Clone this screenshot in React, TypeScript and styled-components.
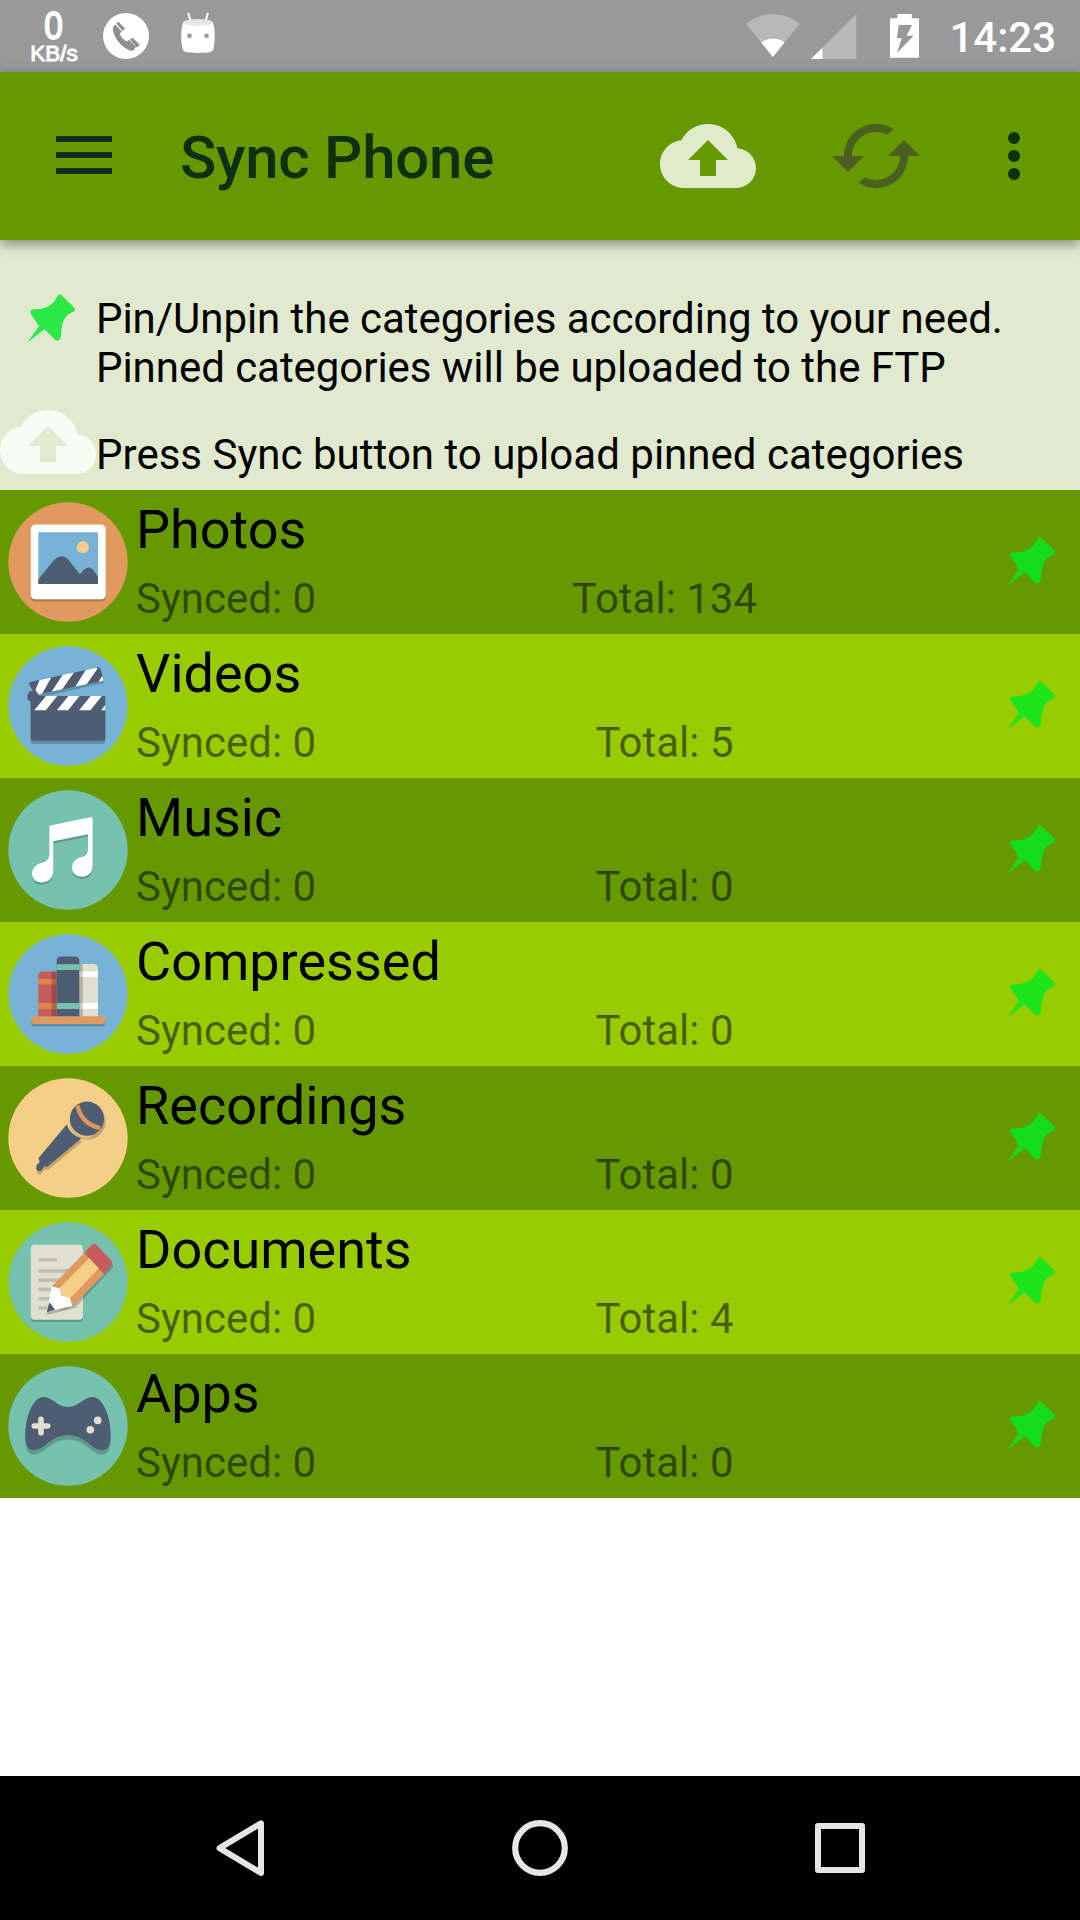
import React from "react";
import styled, { createGlobalStyle } from "styled-components";

const GlobalStyle = createGlobalStyle`
  * { box-sizing: border-box; }
  body { margin: 0; background: #fff; font-family: Roboto, "Noto Sans", sans-serif; }
  svg { display: block; flex: none; overflow: visible; }
`;

const Screen = styled.div`
  width: 1080px;
  height: 1920px;
  display: flex;
  flex-direction: column;
  background: #fff;
  overflow: hidden;
`;

const StatusBar = styled.header`
  height: 72px;
  flex: none;
  display: flex;
  align-items: flex-start;
  justify-content: space-between;
  background: #999;
  color: #fff;
`;

const StatusGroup = styled.div`
  display: flex;
  align-items: flex-start;
  height: 72px;
`;

const NetSpeed = styled.div`
  width: 52px;
  margin: 8px 23px 0 28px;
  display: flex;
  flex-direction: column;
  align-items: center;
  font-family: "Liberation Sans", Arial, sans-serif;
`;

const SpeedValue = styled.span`
  font-size: 38px;
  line-height: 36px;
  -webkit-text-stroke: 1.8px #fff;
  transform: scaleX(0.88);
`;

const SpeedUnit = styled.span`
  font-size: 22.5px;
  line-height: 20px;
  -webkit-text-stroke: 1px #fff;
`;

const Clock = styled.time`
  width: 133px;
  padding-right: 24px;
  margin-top: 13px;
  text-align: right;
  font-size: 42px;
  line-height: 49px;
  font-weight: 500;
`;

const AppBar = styled.nav`
  position: relative;
  height: 168px;
  flex: none;
  display: flex;
  align-items: center;
  background: #690;
  box-shadow: 0 4px 12px rgba(0, 0, 0, 0.42);
`;

const BarButton = styled.button<{ $width: number; $lift?: number }>`
  width: ${(p) => p.$width}px;
  height: 168px;
  padding: 0 0 ${(p) => p.$lift ?? 0}px;
  border: 0;
  background: none;
  display: flex;
  align-items: center;
  justify-content: center;
`;

const Title = styled.h1`
  flex: 1;
  margin: 0 0 0 12px;
  padding-top: 4px;
  font-size: 60px;
  line-height: 70px;
  font-weight: 500;
  letter-spacing: -0.25px;
  color: #0f3010;
`;

const Info = styled.section`
  height: 250px;
  flex: none;
  padding-top: 54px;
  background: #e1e9ce;
`;

const Hint = styled.div<{ $height: number }>`
  height: ${(p) => p.$height}px;
  display: flex;
  align-items: flex-start;
`;

const HintIcon = styled.div`
  width: 96px;
  flex: none;
`;

const PinHolder = styled.div`
  padding: 0 0 0 27px;
`;

const HintText = styled.p<{ $top: number; $tracking: number }>`
  margin: 0;
  padding-top: ${(p) => p.$top}px;
  font-size: 42px;
  line-height: 49px;
  letter-spacing: ${(p) => p.$tracking}px;
  color: #000;
  white-space: nowrap;
`;

const List = styled.ul`
  margin: 0;
  padding: 0;
  flex: 1;
  list-style: none;
`;

const Row = styled.li<{ $light: boolean }>`
  height: 144px;
  display: flex;
  align-items: center;
  padding: 0 25px 0 8px;
  background: ${(p) => (p.$light ? "#9c0" : "#690")};
`;

const RowBody = styled.div`
  flex: 1;
  height: 144px;
  padding: 8px 0 0 8px;
  display: flex;
  flex-direction: column;
  gap: 13px;
`;

const RowTitle = styled.div`
  font-size: 54px;
  line-height: 63px;
  color: #000;
`;

const RowStats = styled.div`
  display: grid;
  grid-template-columns: 351px 355px;
  font-size: 42px;
  line-height: 49px;
  color: rgba(0, 0, 0, 0.54);
`;

const Total = styled.span`
  text-align: center;
`;

const PinSlot = styled.div`
  width: 48px;
  height: 48px;
  margin-bottom: 2px;
`;

const NavBar = styled.footer`
  height: 144px;
  flex: none;
  display: flex;
  justify-content: center;
  background: #000;
`;

const NavButton = styled.button`
  width: 300px;
  height: 144px;
  padding: 0;
  border: 0;
  background: none;
  display: flex;
  align-items: center;
  justify-content: center;
`;

const CloudUpload = () => (
  <svg width="96" height="96" viewBox="0 0 24 24" fill="#fff" fillOpacity="0.8">
    <path d="M19.35 10.04C18.67 6.59 15.64 4 12 4 9.11 4 6.6 5.64 5.35 8.04 2.34 8.36 0 10.91 0 14c0 3.31 2.69 6 6 6h13c2.76 0 5-2.24 5-5 0-2.64-2.05-4.78-4.65-4.96zM14 13v4h-4v-4H7l5-5 5 5h-3z" />
  </svg>
);

const SyncArrows = () => (
  <svg width="96" height="96" viewBox="0 0 24 24" fill="#4a5f20">
    <path d="M19 8l-4 4h3c0 3.31-2.69 6-6 6-1.01 0-1.97-.25-2.8-.7l-1.46 1.46C8.97 19.54 10.43 20 12 20c4.42 0 8-3.58 8-8h3l-4-4zM6 12c0-3.31 2.69-6 6-6 1.01 0 1.97.25 2.8.7l1.46-1.46C15.03 4.46 13.57 4 12 4c-4.42 0-8 3.58-8 8H1l4 4 4-4H6z" />
  </svg>
);

const Pin = ({ color }: { color: string }) => (
  <svg width="48" height="48" viewBox="0 0 48 48" fill={color}>
    <path d="M31 1.2Q33 -.3 35 1.4L47 13.6Q49 16 46.6 17.6L41.5 20.2C36 24.5 34.5 31 34 42Q33.5 46 30.8 46.6Q29.2 47 27.5 45.2L17.6 35.2L.4 48.4L12 32L4.2 20.8Q2.2 18.4 3.8 16.2Q4.8 15 8 15.2C16 15.6 23.5 12.5 27.6 7Z" />
  </svg>
);

const BadgePhotos = () => (
  <>
    <circle cx="60" cy="60" r="59.7" fill="#e0995e" />
    <rect x="22.7" y="25" width="75" height="74.6" rx="4.5" fill="#b37b4b" />
    <rect x="22.7" y="22.6" width="75" height="74.6" rx="4.5" fill="#fff" />
    <path d="M30.3 30.2H90V82H30.3Z" fill="#76b3d6" />
    <circle cx="74.8" cy="45.2" r="6.1" fill="#f5cf87" />
    <path d="M30.3 77.5L46 58Q53.6 50.5 61 58.5L71.8 72.2L76.4 67.4Q81 63.5 85.4 68L90 74.8V82H30.3Z" fill="#4f5d73" />
  </>
);

const BadgeVideos = () => (
  <>
    <circle cx="60" cy="60" r="59.7" fill="#77b3d4" />
    <g fill="#5f90aa">
      <path d="M24 53L95.8 37L95.3 34L26 50Z" />
      <path d="M22.7 60H97.3V95.5Q97.3 98 94.5 98H25.5Q22.7 98 22.7 95.5Z" />
    </g>
    <circle cx="25.3" cy="50.5" r="6" fill="#4f5d73" />
    <path d="M22.7 50H97.3V92.5Q97.3 94.8 94.5 94.8H25.5Q22.7 94.8 22.7 92.5Z" fill="#4f5d73" />
    <path d="M21.2 38Q21 36.2 23 35.7L90 21.4Q92 21 92.5 23L95.8 34.6L27 49.3Z" fill="#4f5d73" />
    <path d="M38 50H49.2L37.8 64.2H26.3ZM60.4 50H71.6L60.1 64.2H48.8ZM82.6 50H93.9L82.4 64.2H71.1ZM97.3 59V64.2H93.2Z" fill="#fff" />
    <path d="M31.6 34L43.2 31.4L34.2 47.6L30.5 48.6L27.4 44ZM54.8 28.8L66 26.4L54.2 43.2L43.7 45.6ZM77.7 23.9L87.5 21.9L89.6 22.5L78.6 38.2L67.4 40.6ZM93.4 27L95.6 34.8L90.6 35.8L94.2 30Z" fill="#fff" />
  </>
);

const notePath =
  "M43.4 35.2L82.4 27.3Q84.7 27 84.7 29.4V75C84.7 82.3 80.5 86.6 74.2 86.6C68 86.6 64 83 64 77.7C64 71.5 69.2 67.8 74.8 66.8C78.9 65.8 80 62.6 80 59V44.3L45.3 51.3V81C45.3 88 40 92.4 33.8 92.4C27.8 92.4 24 88.5 24 83.7C24 77.3 29.6 73.3 35 72.4C39.4 71.4 41.3 68 41.3 64V37.6Q41.3 35.7 43.4 35.2Z";

const BadgeMusic = () => (
  <>
    <circle cx="60" cy="60" r="59.7" fill="#76c2af" />
    <path d={notePath} fill="#5e9b8c" transform="translate(0 2.3)" />
    <path d={notePath} fill="#fff" />
  </>
);

const BadgeBooks = () => (
  <>
    <circle cx="60" cy="60" r="59.7" fill="#77b3d4" />
    <rect x="23.3" y="84.5" width="74" height="8" rx="3" fill="#5f8fa9" />
    <rect x="23.3" y="82.2" width="74" height="7.8" rx="2.5" fill="#e0995e" />
    <path d="M30.3 82.2V41.7Q30.3 37.6 34.5 37.6H48.7V82.2Z" fill="#c75c5c" />
    <path d="M30.3 45H48.7V50.2H30.3ZM30.3 69H48.7V75H30.3Z" fill="#e0854c" />
    <path d="M43.5 37.6H48.7V82.2H43.5Z" fill="#000" fillOpacity="0.2" />
    <path d="M71.3 30H86Q90 30.4 90 34.5V82.2H71.3Z" fill="#e0e0d1" />
    <path d="M71.3 37.6H90V42.8H71.3ZM71.3 69H90V75H71.3Z" fill="#fff" />
    <path d="M71.3 30H74.8V82.2H71.3Z" fill="#000" fillOpacity="0.2" />
    <path d="M48.7 82.2V27Q48.7 22.6 53 22.6H67Q71.3 22.6 71.3 27V82.2Z" fill="#4f5d73" />
    <path d="M48.7 30.2H71.3V36H48.7ZM48.7 69H71.3V75H48.7Z" fill="#76c2af" />
  </>
);

const BadgeRecordings = () => (
  <>
    <circle cx="60" cy="60" r="59.7" fill="#f5cf87" />
    <g transform="translate(1.2 3)" fill="#c4a66c">
      <circle cx="78.4" cy="40.7" r="18" />
      <path d="M58.7 46.4Q62 56.5 73.3 60.6L39 89L36 88.3L31 94L27.5 92L28.5 87L31.8 84L30.3 80.3Z" />
    </g>
    <path d="M62.5 39C60.5 51 69 61.5 81 60.3L84 57.6L66 36Z" fill="#e3c07e" />
    <path d="M58.7 46.4Q62 56.5 73.3 60.6L39 89L36.5 88L33.6 92.4Q30.5 93.6 28.4 92L28.3 87.5L31.8 84L30.3 80.3Z" fill="#4f5d73" />
    <circle cx="79" cy="40.7" r="17.1" fill="#4f5d73" />
    <path d="M69.4 27.6Q73.5 46 92.2 50.2" fill="none" stroke="#e0955a" strokeWidth="4.4" />
  </>
);

const BadgeDocuments = () => (
  <>
    <circle cx="60" cy="60" r="59.7" fill="#76c2af" />
    <rect x="22.7" y="25" width="52.3" height="75" rx="4" fill="#5e9b8c" />
    <rect x="22.7" y="22.7" width="52.3" height="75" rx="4" fill="#e0e0d1" />
    <path d="M30.3 36H49V39.6H30.3ZM30.3 47.2H67V50.8H30.3ZM30.3 56.5H62V60.1H30.3ZM30.3 65.7H60V69.3H30.3ZM30.3 75H60V78.6H30.3ZM30.3 84.2H60V87.8H30.3Z" fill="#bdbdb1" />
    <path d="M43.7 67L88 25L104.5 42.5Q106 44.5 104 46.5L67 86L38.7 93Z" fill="#231f20" fillOpacity="0.25" />
    <path d="M43.7 64.6L76.3 30.7L96 52L65.6 83.6Z" fill="#e0995e" />
    <path d="M51.5 66L81.6 35.8L91.2 46L62.5 76L54 73.5Z" fill="#f5cf87" />
    <path d="M76.3 30.7L83.6 23Q86.3 20.8 88.7 22.9L103.3 38.6Q105.2 41 103.2 43.5L96 52Z" fill="#c75c5c" />
    <path d="M43.7 64.6L51.7 66.2L53.4 73.6L61.8 75.8L64.2 83.8L38.7 90.2Z" fill="#fff" />
    <path d="M41.3 80.2L47.2 87.8L38.7 90.2Z" fill="#4f5d73" />
  </>
);

const padPath =
  "M35.5 31C45 31 48.5 41 60 41C71.5 41 75 31 84.5 31C95.5 31 102.7 52 102.7 69C102.7 79 100 84.2 94 84.2C84 84.2 76.5 69 60 69C43.5 69 36 84.2 26 84.2C20 84.2 17.3 79 17.3 69C17.3 52 24.5 31 35.5 31Z";

const BadgeApps = () => (
  <>
    <circle cx="60" cy="60" r="59.7" fill="#76c2af" />
    <path d={padPath} fill="#5e9b8c" transform="translate(0 4.6)" />
    <path d={padPath} fill="#4f5d73" />
    <path d="M33 53.4V66.7M26.3 60H39.7" stroke="#e0e0d1" strokeWidth="5.6" strokeLinecap="round" />
    <circle cx="89.7" cy="54.4" r="3.8" fill="#e0e0d1" />
    <circle cx="82.3" cy="63.8" r="3.8" fill="#e0e0d1" />
  </>
);

type Category = { name: string; total: number; Badge: React.FC };

const categories: Category[] = [
  { name: "Photos", total: 134, Badge: BadgePhotos },
  { name: "Videos", total: 5, Badge: BadgeVideos },
  { name: "Music", total: 0, Badge: BadgeMusic },
  { name: "Compressed", total: 0, Badge: BadgeBooks },
  { name: "Recordings", total: 0, Badge: BadgeRecordings },
  { name: "Documents", total: 4, Badge: BadgeDocuments },
  { name: "Apps", total: 0, Badge: BadgeApps },
];

export default function App() {
  return (
    <Screen>
      <GlobalStyle />
      <StatusBar>
        <StatusGroup>
          <NetSpeed>
            <SpeedValue>0</SpeedValue>
            <SpeedUnit>KB/s</SpeedUnit>
          </NetSpeed>
          <svg width="46" height="72" viewBox="103 0 46 72">
            <circle cx="126" cy="36" r="23" fill="#fff" />
            <path d="M113 27L115.4 24.4L121.8 31.4L119.8 33.6C120.7 37 123.5 40.2 126.8 41.5L129 39.8L136 46.8L133.4 50.2C131.5 51.5 128 50.3 124.5 47.5C117.5 42.5 111.8 33 113 27Z" fill="#8f8f8f" />
            <path d="M116.2 23.4L118.2 21.4L125 28.4L122.6 31ZM130 39.4L132.6 37.8L139.8 44.8L137 47.6Z" fill="#8f8f8f" />
          </svg>
          <svg width="66" height="72" viewBox="149 0 66 72">
            <path d="M188.4 13.6L190.4 20.5M207.8 13.6L205.8 20.5" stroke="#fff" strokeWidth="2" strokeLinecap="round" />
            <path d="M183 22.5C180.7 30 180.7 42 182.8 49.5Q183.5 51.5 186 52C192 53.2 204 53.2 210 52Q212.5 51.5 213.2 49.5C215.3 42 215.3 30 213 22.5Z" fill="#fff" />
            <ellipse cx="198" cy="22.4" rx="15" ry="3.5" fill="#e6e6e6" />
            <circle cx="189.5" cy="35.8" r="2.3" fill="#999" />
            <circle cx="206.5" cy="35.8" r="2.3" fill="#999" />
          </svg>
        </StatusGroup>
        <StatusGroup>
          <svg width="54" height="72" viewBox="745.6 0 54 72">
            <path d="M772.5 57L745.6 23.8C761 11 784 11 799.4 23.8Z" fill="#b8b8b8" />
            <path d="M772.5 57L761 42.6C767.5 37 777.5 37 784 42.6Z" fill="#fff" />
          </svg>
          <svg width="90.4" height="72" viewBox="799.6 0 90.4 72">
            <path d="M810.6 59L856 14V59Z" fill="#b8b8b8" />
            <path d="M810.6 59L822 47.7V59Z" fill="#fff" />
          </svg>
          <svg width="57" height="72" viewBox="890 0 57 72">
            <path d="M890 18.2H897.2V14H911.8V18.2H919V57.8H890Z" fill="#fff" />
            <path d="M898.8 25H912L906.6 35.7H913.7L897 53L901.6 38.3H896.8Z" fill="#999" />
          </svg>
          <Clock>14:23</Clock>
        </StatusGroup>
      </StatusBar>

      <AppBar>
        <BarButton $width={168} $lift={2} aria-label="Menu">
          <svg width="56" height="38" viewBox="0 0 56 38" fill="#0f3010">
            <path d="M0 0H56V6H0ZM0 16H56V22H0ZM0 32H56V38H0Z" />
          </svg>
        </BarButton>
        <Title>Sync Phone</Title>
        <BarButton $width={168} aria-label="Upload">
          <CloudUpload />
        </BarButton>
        <BarButton $width={168} aria-label="Sync">
          <SyncArrows />
        </BarButton>
        <BarButton $width={120} aria-label="More">
          <svg width="12" height="48" viewBox="0 0 12 48" fill="#0f3010">
            <circle cx="0" cy="6" r="6" />
            <circle cx="0" cy="24" r="6" />
            <circle cx="0" cy="42" r="6" />
          </svg>
        </BarButton>
      </AppBar>

      <Info>
        <Hint $height={100}>
          <HintIcon>
            <PinHolder>
              <Pin color="#2be846" />
            </PinHolder>
          </HintIcon>
          <HintText $top={0} $tracking={-0.045}>
            Pin/Unpin the categories according to your need.
            <br />
            Pinned categories will be uploaded to the FTP
          </HintText>
        </Hint>
        <Hint $height={96}>
          <HintIcon>
            <CloudUpload />
          </HintIcon>
          <HintText $top={36} $tracking={0.02}>
            Press Sync button to upload pinned categories
          </HintText>
        </Hint>
      </Info>

      <List>
        {categories.map(({ name, total, Badge }, i) => (
          <Row key={name} $light={i % 2 === 1}>
            <svg width="120" height="120" viewBox="0 0 120 120" fill="none">
              <Badge />
            </svg>
            <RowBody>
              <RowTitle>{name}</RowTitle>
              <RowStats>
                <span>Synced: 0</span>
                <Total>Total: {total}</Total>
              </RowStats>
            </RowBody>
            <PinSlot>
              <Pin color={i % 2 === 1 ? "#1ce41c" : "#12dc1c"} />
            </PinSlot>
          </Row>
        ))}
      </List>

      <NavBar>
        <NavButton aria-label="Back">
          <svg width="56" height="56" viewBox="212 1820 56 56" fill="none" stroke="#e6e6e6" strokeWidth="6" strokeLinejoin="round">
            <path d="M261 1823.3V1872.9L219.5 1848.1Z" />
          </svg>
        </NavButton>
        <NavButton aria-label="Home">
          <svg width="56" height="56" viewBox="0 0 56 56" fill="none" stroke="#e6e6e6" strokeWidth="6.2">
            <circle cx="28" cy="28" r="24.8" />
          </svg>
        </NavButton>
        <NavButton aria-label="Recents">
          <svg width="50" height="50" viewBox="0 0 50 50" fill="none" stroke="#e6e6e6" strokeWidth="6" strokeLinejoin="round">
            <rect x="3" y="3" width="44" height="44" />
          </svg>
        </NavButton>
      </NavBar>
    </Screen>
  );
}
